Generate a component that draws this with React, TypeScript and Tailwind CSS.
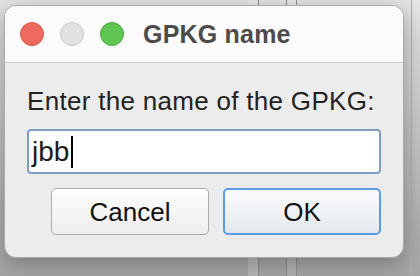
import React from "react";

const font = { fontFamily: '"Liberation Sans", Arial, sans-serif' };

function TrafficLight({ color }: { color: string }) {
  return <span className={`block h-[24px] w-[24px] rounded-full border ${color}`} />;
}

export default function App() {
  return (
    <div
      className="relative h-[276px] w-[420px] overflow-hidden bg-gradient-to-b from-[#e6e6e6] via-[#c4c4c4] to-[#a6a6a6]"
      style={font}
    >
      {/* background window panes */}
      <div className="flex h-full">
        <div className="w-[248px]" />
        <div className="w-[10px] bg-white/20" />
        <div className="w-[1px] bg-[#8a8a8a]" />
        <div className="w-[27px]" />
        <div className="w-[1px] bg-[#8a8a8a]" />
        <div className="w-[9px] bg-white/15" />
        <div className="w-[1px] bg-[#8f8f8f]" />
        <div className="w-[114px]" />
        <div className="w-[1px] bg-[#b0b0b0]" />
      </div>

      {/* dialog */}
      <div className="absolute left-[4px] top-[5px] flex h-[253px] w-[400px] flex-col overflow-hidden rounded-[12px] border border-[#a9a9a9] bg-[#ececec] shadow-[0_6px_24px_rgba(0,0,0,0.3)]">
        <div className="flex h-[57px] shrink-0 items-center border-b border-[#cdcdcd] bg-[#fbfbfb] pl-[15px]">
          <div className="flex items-center gap-[16px]">
            <TrafficLight color="border-[#d6574c] bg-[#ee6a5f]" />
            <TrafficLight color="border-[#c9c9c9] bg-[#e1e1e1]" />
            <TrafficLight color="border-[#4aa63d] bg-[#61c554]" />
          </div>
          <span className="ml-[19px] text-[25px] font-bold leading-[30px] tracking-[0.2px] text-[#4b4b4b]">
            GPKG name
          </span>
        </div>

        <div className="flex flex-1 flex-col pl-[22px] pr-[22px] pt-[23px]">
          <div className="text-[26px] leading-[30px] tracking-[0.3px] text-[#222222]">Enter the name of the GPKG:</div>

          <div className="mt-[13px] flex h-[45px] items-center rounded-[4px] border-2 border-[#809cc0] bg-white pl-[3px]">
            <span className="text-[28px] leading-[32px] text-[#1c1c1c]">jbb</span>
            <span className="ml-[2px] h-[32px] w-[2px] bg-black" />
          </div>

          <div className="mt-[14px] flex justify-end gap-[14px]">
            <button className="h-[47px] w-[158px] rounded-[5px] border-[1.5px] border-[#ababab] bg-gradient-to-b from-[#fdfdfd] to-[#eeeeee] text-[26px] leading-[30px] text-[#111111]">
              Cancel
            </button>
            <button className="h-[47px] w-[158px] rounded-[5px] border-2 border-[#5b9be6] bg-gradient-to-b from-[#fafbfc] to-[#e4e8ee] text-[26px] leading-[30px] text-[#111111]">
              OK
            </button>
          </div>
        </div>
      </div>
    </div>
  );
}
